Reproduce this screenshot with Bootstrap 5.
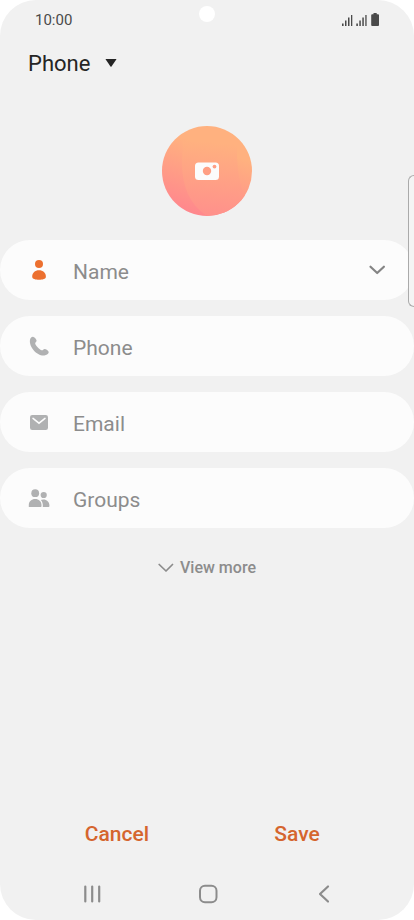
<!DOCTYPE html>
<html lang="en">
<head>
<meta charset="utf-8">
<meta name="viewport" content="width=device-width, initial-scale=1">
<title>New contact</title>
<link href="https://cdn.jsdelivr.net/npm/bootstrap@5.3.0/dist/css/bootstrap.min.css" rel="stylesheet">
<style>
body { background: #fff; font-family: Roboto, sans-serif; color: #252525; }
svg { display: block; flex: none; }
.screen { min-height: 100vh; background: #f1f1f1; border-radius: 36px; }
.status { height: 40px; padding: 0 35px; font-size: 15px; color: #4a4a4a; }
.lens { width: 16px; height: 16px; background: #fff; margin-bottom: 12px; }
.side { flex: 1 1 0; }
.account { height: 48px; padding-left: 28px; }
.account select { appearance: none; background: none; font-size: 22px; line-height: 32px; color: #252525; padding: 0 28px 0 0; }
.account svg { margin-left: -14px; margin-bottom: 3px; pointer-events: none; }
.photo { width: 90px; height: 90px; margin: 38px auto 24px; }
.fields { gap: 16px; }
.field { height: 60px; border-radius: 30px; background: #fcfcfc; padding: 0 28px; }
.field label { gap: 23px; color: #8c8c8c; }
.field label span, .field input { font-size: 21px; line-height: 32px; padding-top: 3px; }
.field input { margin-left: 12px; color: #252525; min-width: 0; outline: 0; }
.more { font-size: 16px; line-height: 24px; font-weight: 500; color: #8c8c8c; margin-top: 28px; gap: 6px; }
.actions { padding: 0 27px; }
.actions .btn { --bs-btn-color: #d5652e; --bs-btn-hover-color: #b9501e; font-size: 21px; line-height: 32px; font-weight: 500; border: 0; }
.keys { height: 52px; padding: 0 32px 0 34px; margin-top: 18px; }
.edge { top: 175px; right: 0; width: 6px; height: 132px; border: 1px solid #aaa; border-right: 0; border-radius: 6px 0 0 6px; background: #f4f4f4; }
</style>
<script defer src="https://cdn.jsdelivr.net/npm/bootstrap@5.3.0/dist/js/bootstrap.bundle.min.js"></script>
</head>
<body>
<div class="screen position-relative d-flex flex-column overflow-hidden">
  <header>
    <div class="status d-flex align-items-center">
      <span class="side">10:00</span>
      <span class="lens rounded-circle"></span>
      <span class="side d-flex justify-content-end">
        <svg width="38" height="14" viewBox="0 0 38 14" fill="#4a4a4a" aria-hidden="true">
          <path id="bars" d="M1 10.500h1.600V13H1zM4 7.500h1.500V13H4zM7 4.500h1.500V13H7zM10 2h1.300v11H10z"/>
          <use href="#bars" x="14.300"/>
          <path d="M32.500 0h3.200v1.300h1.400q.9 0 .9.900v9.900q0 .9-.9.900h-6q-.9 0-.9-.9V2.200q0-.9.9-.9h1.400z"/>
        </svg>
      </span>
    </div>
    <div class="account d-flex align-items-center">
      <select class="border-0" aria-label="Save contact to"><option>Phone</option></select>
      <svg width="12" height="8" viewBox="0 0 12 8" fill="#252525" aria-hidden="true"><path d="M1 0h10q.7 0 .3.600L6.500 7.500q-.5.600-1 0L.7.600Q.3 0 1 0z"/></svg>
    </div>
  </header>
  <main class="d-flex flex-column">
    <button type="button" class="photo btn p-0 border-0 rounded-circle" aria-label="Add photo">
      <svg width="90" height="90" viewBox="0 0 90 90">
        <defs>
          <linearGradient id="base" gradientUnits="userSpaceOnUse" x1="50" y1="22" x2="26" y2="90"><stop offset="0" stop-color="#ffb17f"/><stop offset="1" stop-color="#ff858e"/></linearGradient>
          <linearGradient id="glow" gradientUnits="userSpaceOnUse" x1="48" y1="16" x2="40" y2="92"><stop offset="0" stop-color="#ffb17f"/><stop offset="1" stop-color="#ff8f8c"/></linearGradient>
          <clipPath id="disc"><circle cx="45" cy="45" r="45"/></clipPath>
        </defs>
        <g clip-path="url(#disc)">
          <path fill="url(#base)" d="M0 0h90v90H0z"/>
          <path fill="url(#glow)" d="M21 16H75Q74 55 84 72L75 90H45Q19 73 20 34z"/>
        </g>
        <rect x="33" y="36.500" width="24" height="17.500" rx="3.500" fill="#fcfcfc"/>
        <circle cx="45" cy="45" r="4.200" fill="#ff9f84"/><circle cx="52.500" cy="40.600" r="1.900" fill="#ff9f84"/>
      </svg>
    </button>
    <form class="fields d-flex flex-column">
      <div class="field d-flex align-items-center">
        <label class="d-flex align-items-center" for="name"><svg aria-hidden="true" width="22" height="22" viewBox="0 0 22 22" fill="#ec702f"><circle cx="11" cy="5" r="4"/><path d="M4.200 17.700C4.200 14 7 11.300 11 11.300s6.900 2.700 6.900 6.400C17.900 20 14.500 20.700 11 20.700s-6.800-.7-6.800-3z"/></svg><span>Name</span></label>
        <input id="name" class="border-0 bg-transparent flex-grow-1" type="text">
        <button type="button" class="btn p-0 border-0" aria-label="More name fields"><svg width="18" height="12" viewBox="0 0 18 12" fill="none" stroke="#848484" stroke-width="2.200" stroke-linecap="round" stroke-linejoin="round"><path d="M2.500 2.700l6.700 6.300L15.900 2.700"/></svg></button>
      </div>
      <div class="field d-flex align-items-center">
        <label class="d-flex align-items-center" for="phone"><svg aria-hidden="true" width="22" height="22" viewBox="0 0 22 22" fill="#b0b1b2"><path d="M2 4.700C2.400 2.700 4 1.600 5.400 1.900c1.400.3 3.200 2.600 3.200 3.900 0 1.300-1.700 1.600-1.400 2.900.5 2 4.500 6 6.500 6.500 1.200.3 1.600-1.200 2.900-1.300 1.300-.1 3.900 1.600 4.100 3 .2 1.400-1.500 2.900-3.600 3.400C10 21.900.6 12.300 2 4.700z"/></svg><span>Phone</span></label>
        <input id="phone" class="border-0 bg-transparent flex-grow-1" type="tel">
      </div>
      <div class="field d-flex align-items-center">
        <label class="d-flex align-items-center" for="email"><svg aria-hidden="true" width="22" height="22" viewBox="0 0 22 22"><rect x="2" y="4" width="18" height="15" rx="2.200" fill="#b0b1b2"/><path d="M5 7.400l6 4.800 6-4.800" fill="none" stroke="#fcfcfc" stroke-width="1.500" stroke-linecap="round"/></svg><span>Email</span></label>
        <input id="email" class="border-0 bg-transparent flex-grow-1" type="email">
      </div>
      <div class="field d-flex align-items-center">
        <label class="d-flex align-items-center" for="groups"><svg aria-hidden="true" width="22" height="22" viewBox="0 0 22 22" fill="#b0b1b2"><circle cx="7.200" cy="6.200" r="3.900"/><circle cx="15.700" cy="8" r="3.100"/><path d="M.8 20v-2c0-3.500 2.800-6 6.400-6s6.300 2.500 6.300 6v1.200q0 .8-.8.800zM14.800 20q.4-4.700-2-7 .8-.5 2.600-.5c3.400 0 6 2.500 6 5.700v1q0 .8-.8.800z"/></svg><span>Groups</span></label>
        <input id="groups" class="border-0 bg-transparent flex-grow-1" type="text">
      </div>
    </form>
    <button type="button" class="more btn p-0 border-0 d-flex align-items-center align-self-center">
      <svg width="16" height="10" viewBox="0 0 16 10" fill="none" stroke="#8c8c8c" stroke-width="1.700" stroke-linecap="round" stroke-linejoin="round" aria-hidden="true"><path d="M1.200 1.500L8 8l6.500-6.500"/></svg>View more
    </button>
  </main>
  <footer class="mt-auto">
    <div class="actions row g-0 text-center">
      <div class="col"><button type="button" class="btn py-0">Cancel</button></div>
      <div class="col"><button type="button" class="btn py-0">Save</button></div>
    </div>
    <nav class="keys d-flex" aria-label="System keys">
      <button type="button" class="btn p-0 border-0 col-4 d-flex justify-content-center align-items-center" aria-label="Recent apps"><svg width="20" height="20" viewBox="0 0 20 20" stroke="#8c8c8c" stroke-width="2.200" stroke-linecap="round"><path d="M3.300 2.500v15M10.200 2.500v15M17.200 2.500v15"/></svg></button>
      <button type="button" class="btn p-0 border-0 col-4 d-flex justify-content-center align-items-center" aria-label="Home"><svg width="20" height="20" viewBox="0 0 20 20" fill="none" stroke="#8c8c8c" stroke-width="2"><rect x="2" y="1.800" width="16.500" height="16.500" rx="5"/></svg></button>
      <button type="button" class="btn p-0 border-0 col-4 d-flex justify-content-center align-items-center" aria-label="Back"><svg width="20" height="20" viewBox="0 0 20 20" fill="none" stroke="#8c8c8c" stroke-width="2.200" stroke-linecap="round" stroke-linejoin="round"><path d="M14 2.500L6 10l8 7.500"/></svg></button>
    </nav>
  </footer>
  <div class="edge position-absolute"></div>
</div>
</body>
</html>
